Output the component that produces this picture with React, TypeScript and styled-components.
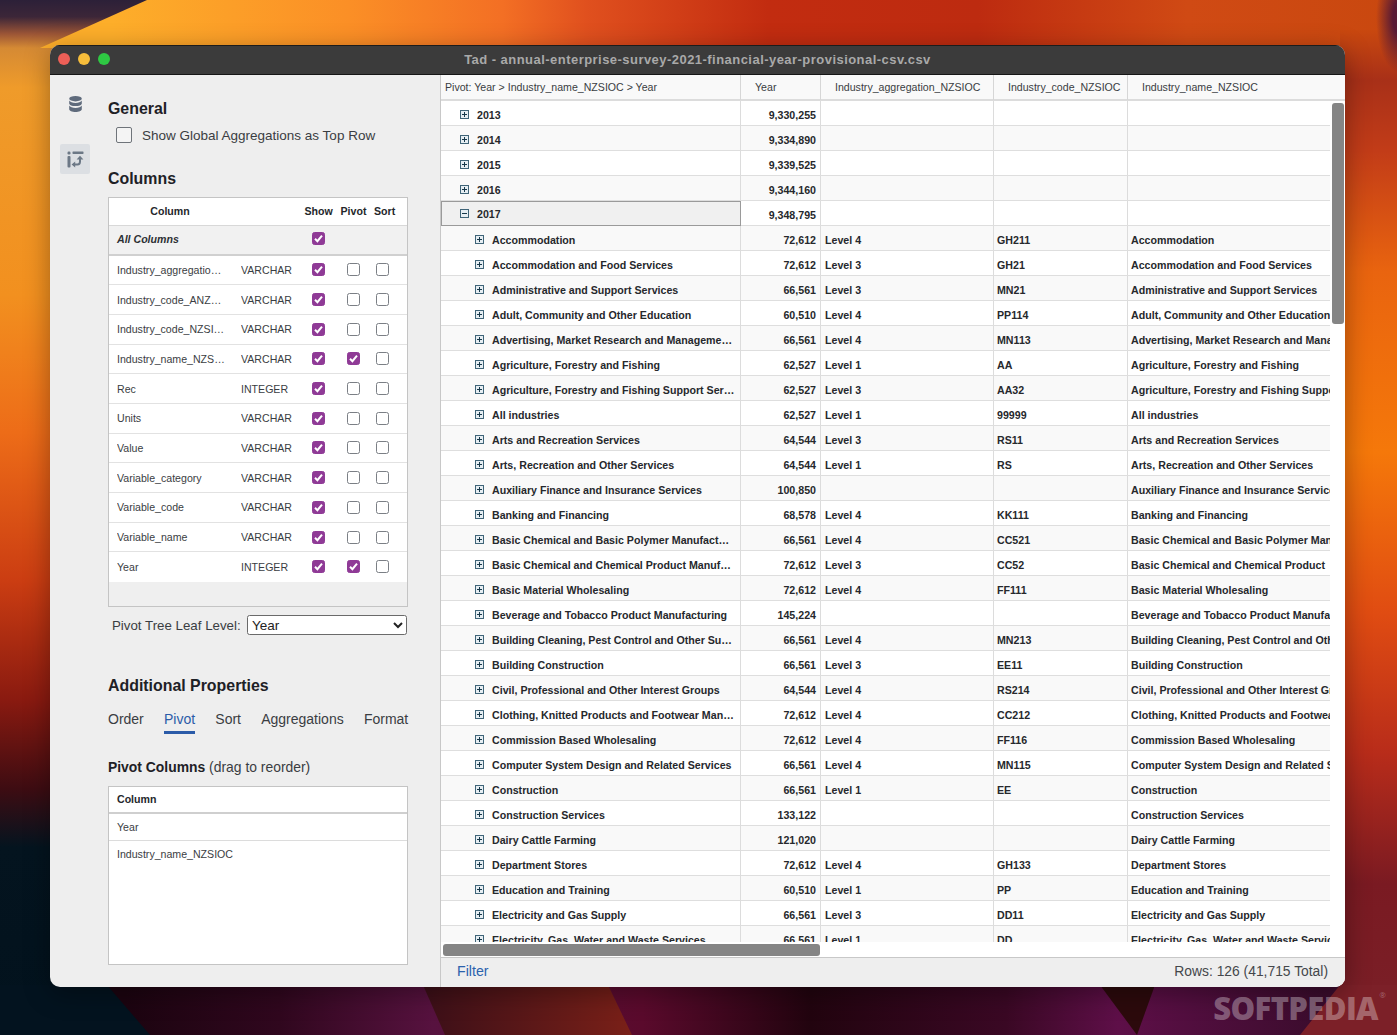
import React from "react";
import styled, { createGlobalStyle } from "styled-components";

const Global = createGlobalStyle`
  html, body { margin: 0; padding: 0; background: #1a0a14; }
  body { font-family: "Liberation Sans", Arial, sans-serif; color: #222; overflow: hidden; }
  * { box-sizing: border-box; }
`;

const Desktop = styled.div`
  position: relative;
  width: 1397px;
  height: 1035px;
  padding: 45px 52px 48px 50px;
  overflow: hidden;
`;
const Wallpaper = styled.svg`
  position: absolute;
  inset: 0;
  width: 1397px;
  height: 1035px;
`;
const Watermark = styled.div`
  position: absolute;
  right: 19px;
  bottom: 10px;
  font-family: "Open Sans", "Liberation Sans", sans-serif;
  font-weight: 800;
  font-size: 31px;
  line-height: 34px;
  letter-spacing: -0.6px;
  color: rgba(255, 255, 255, 0.32);
  sup { font-size: 8px; font-weight: 400; position: absolute; top: -2px; right: -8px; line-height: 12px; letter-spacing: 0; }
`;
const Window = styled.div`
  position: relative;
  width: 100%;
  height: 100%;
  display: flex;
  flex-direction: column;
  border-radius: 10px;
  overflow: hidden;
  background: #eee;
  box-shadow: 0 6px 26px rgba(0, 0, 0, 0.35);
`;
const TitleBar = styled.div`
  position: relative;
  height: 30px;
  flex: none;
  padding-bottom: 2px;
  background: #3b3b3b;
  border-top: 1px solid #1c1c1c;
  border-bottom: 1px solid #161616;
  display: flex;
  align-items: center;
  justify-content: center;
  font-size: 13px;
  font-weight: 700;
  letter-spacing: 0.46px;
  color: #a9a9a9;
`;
const Lights = styled.div`
  position: absolute;
  left: 8px;
  top: 7px;
  display: flex;
  gap: 8px;
`;
const Light = styled.span<{ $c: string }>`
  width: 12px;
  height: 12px;
  border-radius: 50%;
  background: ${(p) => p.$c};
`;
const Body = styled.div`
  flex: 1;
  min-height: 0;
  display: flex;
`;
const Rail = styled.div`
  width: 58px;
  flex: none;
  padding: 14px 0 0 10px;
  display: flex;
  flex-direction: column;
  gap: 25px;
`;
const RailBtn = styled.div<{ $active?: boolean }>`
  width: 30px;
  height: 30px;
  display: flex;
  align-items: center;
  justify-content: center;
  background: ${(p) => (p.$active ? "#dcdfe3" : "transparent")};
  border-radius: 2px;
`;
const Props = styled.div`
  width: 332px;
  flex: none;
  padding-top: 24px;
  display: flex;
  flex-direction: column;
`;
const H2 = styled.h2<{ $mt?: number }>`
  margin: ${(p) => p.$mt ?? 0}px 0 0;
  height: 18px;
  padding-top: 1px;
  font-size: 15.9px;
  line-height: 18px;
  font-weight: 700;
  color: #1e2126;
`;
const GlobalRow = styled.div`
  margin: 9px 0 0 8px;
  height: 18px;
  display: flex;
  align-items: center;
  gap: 10px;
  font-size: 13.5px;
  color: #3a3d42;
`;
const BigBox = styled.span`
  width: 16px;
  height: 16px;
  border: 1px solid #6f747a;
  border-radius: 2px;
  background: #f4f4f4;
`;
const ColTable = styled.div`
  margin-top: 10px;
  width: 300px;
  height: 410px;
  border: 1.5px solid #c4c4c4;
  background: #efefef;
`;
const ColRowBase = styled.div<{ $h: number; $bg: string; $line: string; $lw?: number; $pb?: number }>`
  height: ${(p) => p.$h}px;
  display: grid;
  grid-template-columns: 124px 60px 35px 35px 23px 1fr;
  align-items: center;
  padding: 0 0 ${(p) => p.$pb ?? 0}px 8px;
  background: ${(p) => p.$bg};
  border-bottom: ${(p) => p.$lw ?? 1}px solid ${(p) => p.$line};
  font-size: 10.6px;
  color: #3a3d42;
`;
const ColHead = styled.span<{ $pl?: number; $pr?: number }>`
  font-weight: 700;
  font-size: 10.6px;
  color: #24272b;
  text-align: center;
  white-space: nowrap;
  padding-left: ${(p) => p.$pl ?? 0}px;
  padding-right: ${(p) => p.$pr ?? 0}px;
`;
const AllLabel = styled.span`
  font-weight: 700;
  font-style: italic;
  color: #2c2f33;
`;
const Cell = styled.span`
  white-space: nowrap;
  overflow: hidden;
`;
const BoxCell = styled.span`
  display: flex;
  justify-content: center;
`;
const Box = styled.span<{ $on?: boolean }>`
  width: 13px;
  height: 13px;
  border-radius: 2.5px;
  display: flex;
  align-items: center;
  justify-content: center;
  background: ${(p) => (p.$on ? "#8f3a96" : "#fff")};
  border: 1px solid ${(p) => (p.$on ? "#8f3a96" : "#7b7f85")};
`;
const LeafRow = styled.div`
  margin-top: 8px;
  padding-left: 4px;
  width: 299px;
  height: 20px;
  display: flex;
  align-items: center;
  justify-content: space-between;
  font-size: 13.3px;
  color: #3a3d42;
`;
const LeafSelect = styled.select`
  flex: none;
  width: 160px;
  height: 20px;
  font-family: "Liberation Sans", Arial, sans-serif;
  font-size: 13.5px;
  color: #222;
  background: #fff;
  border: 1px solid #6a6a6a;
  border-radius: 2.5px;
  padding: 0;
`;
const Tabs = styled.div`
  margin-top: 15px;
  height: 25px;
  display: flex;
  gap: 20.2px;
  font-size: 14px;
`;
const Tab = styled.span<{ $active?: boolean }>`
  height: 25px;
  padding-top: 1px;
  line-height: 19px;
  color: ${(p) => (p.$active ? "#2b5ba8" : "#3a3d42")};
  border-bottom: 3px solid ${(p) => (p.$active ? "#2b5ba8" : "transparent")};
`;
const SubTitle = styled.div`
  margin-top: 25px;
  font-size: 13.9px;
  line-height: 16px;
  color: #3a3d42;
  b { color: #1e2126; }
`;
const PivotTable = styled.div`
  margin-top: 11px;
  width: 300px;
  height: 179px;
  background: #fff;
  border: 1.5px solid #c4c4c4;
`;
const PivotHead = styled.div`
  height: 26.5px;
  padding: 0 8px;
  display: flex;
  align-items: center;
  font-size: 10.6px;
  font-weight: 700;
  color: #24272b;
  border-bottom: 2px solid #cfcfcf;
`;
const PivotItem = styled.div<{ $last?: boolean }>`
  height: 27px;
  padding: 0 8px;
  display: flex;
  align-items: center;
  font-size: 10.6px;
  color: #3a3d42;
  border-bottom: ${(p) => (p.$last ? "0" : "1px solid #dcdcdc")};
`;
const GridPane = styled.div`
  flex: 1;
  min-width: 0;
  display: flex;
  flex-direction: column;
  background: #fff;
  border-left: 1px solid #c8c8c8;
`;
const GridMain = styled.div`
  position: relative;
  flex: 1;
  min-height: 0;
  overflow: hidden;
`;
const HeadRow = styled.div`
  height: 26px;
  display: grid;
  grid-template-columns: 300px 80px 173px 134px 1fr;
  background: #f9f9f9;
  border-bottom: 2px solid #dcdcdc;
  font-size: 10.6px;
  color: #3a3d42;
`;
const HeadCell = styled.div<{ $pl: number }>`
  padding-left: ${(p) => p.$pl}px;
  line-height: 25px;
  border-right: 1px solid #d6d6d6;
  white-space: nowrap;
  &:last-child { border-right: 0; }
`;
const RowsClip = styled.div`
  width: 889px;
  height: 841px;
  overflow: hidden;
`;
const Row = styled.div<{ $odd: boolean }>`
  height: 25px;
  display: grid;
  grid-template-columns: 300px 80px 173px 134px 202px;
  background: ${(p) => (p.$odd ? "#f9f9f9" : "#fff")};
  border-bottom: 1px solid #dedede;
  font-size: 10.65px;
  font-weight: 700;
  color: #26282c;
`;
const DCell = styled.div<{ $right?: boolean; $pl?: number }>`
  height: 24px;
  padding: 7px 4px 0 ${(p) => p.$pl ?? 3}px;
  line-height: 14px;
  white-space: nowrap;
  overflow: hidden;
  text-align: ${(p) => (p.$right ? "right" : "left")};
  border-right: 1px solid #dcdcdc;
  &:last-child { border-right: 0; }
`;
const TreeCell = styled.div<{ $depth: number; $sel?: boolean }>`
  height: 25px;
  padding: 7px 0 0 ${(p) => 19 + p.$depth * 15}px;
  display: flex;
  align-items: flex-start;
  gap: 8px;
  line-height: 14px;
  white-space: nowrap;
  overflow: hidden;
  border-right: 1px solid #dcdcdc;
  ${(p) => (p.$sel ? "background:#f0f0f0; outline:1px solid #9a9a9a; outline-offset:-1px; padding-top:6px;" : "")}
`;
const Toggle = styled.svg`
  width: 9px;
  height: 9px;
  flex: none;
  margin-top: 2px;
`;
const VBar = styled.div`
  position: absolute;
  left: 891px;
  top: 28px;
  width: 12px;
  height: 221px;
  border-radius: 3px;
  background: #858585;
`;
const HBar = styled.div`
  position: absolute;
  left: 2px;
  bottom: 1px;
  width: 377px;
  height: 12px;
  border-radius: 3px;
  background: #858585;
`;
const Footer = styled.div`
  height: 30px;
  flex: none;
  display: flex;
  align-items: center;
  justify-content: space-between;
  padding: 0 17px 3px 16px;
  background: #eee;
  border-top: 1px solid #c8c8c8;
  font-size: 13.85px;
  color: #44474b;
`;
const FilterLink = styled.span`
  color: #2b62ad;
  font-size: 14.2px;
`;

const rawRows: [string, string, string, string, string?][] = [
  ["Accommodation", "72,612", "Level 4", "GH211"],
  ["Accommodation and Food Services", "72,612", "Level 3", "GH21"],
  ["Administrative and Support Services", "66,561", "Level 3", "MN21"],
  ["Adult, Community and Other Education", "60,510", "Level 4", "PP114"],
  ["Advertising, Market Research and Manageme…", "66,561", "Level 4", "MN113", "Advertising, Market Research and Management Services"],
  ["Agriculture, Forestry and Fishing", "62,527", "Level 1", "AA"],
  ["Agriculture, Forestry and Fishing Support Ser…", "62,527", "Level 3", "AA32", "Agriculture, Forestry and Fishing Support Services"],
  ["All industries", "62,527", "Level 1", "99999"],
  ["Arts and Recreation Services", "64,544", "Level 3", "RS11"],
  ["Arts, Recreation and Other Services", "64,544", "Level 1", "RS"],
  ["Auxiliary Finance and Insurance Services", "100,850", "", ""],
  ["Banking and Financing", "68,578", "Level 4", "KK111"],
  ["Basic Chemical and Basic Polymer Manufact…", "66,561", "Level 4", "CC521", "Basic Chemical and Basic Polymer Manufacturing"],
  ["Basic Chemical and Chemical Product Manuf…", "72,612", "Level 3", "CC52", "Basic Chemical and Chemical Product"],
  ["Basic Material Wholesaling", "72,612", "Level 4", "FF111"],
  ["Beverage and Tobacco Product Manufacturing", "145,224", "", ""],
  ["Building Cleaning, Pest Control and Other Su…", "66,561", "Level 4", "MN213", "Building Cleaning, Pest Control and Other Support Services"],
  ["Building Construction", "66,561", "Level 3", "EE11"],
  ["Civil, Professional and Other Interest Groups", "64,544", "Level 4", "RS214"],
  ["Clothing, Knitted Products and Footwear Man…", "72,612", "Level 4", "CC212", "Clothing, Knitted Products and Footwear Manufacturing"],
  ["Commission Based Wholesaling", "72,612", "Level 4", "FF116"],
  ["Computer System Design and Related Services", "66,561", "Level 4", "MN115"],
  ["Construction", "66,561", "Level 1", "EE"],
  ["Construction Services", "133,122", "", ""],
  ["Dairy Cattle Farming", "121,020", "", ""],
  ["Department Stores", "72,612", "Level 4", "GH133"],
  ["Education and Training", "60,510", "Level 1", "PP"],
  ["Electricity and Gas Supply", "66,561", "Level 3", "DD11"],
  ["Electricity, Gas, Water and Waste Services", "66,561", "Level 1", "DD"],
];

const years: [string, string][] = [
  ["2013", "9,330,255"],
  ["2014", "9,334,890"],
  ["2015", "9,339,525"],
  ["2016", "9,344,160"],
  ["2017", "9,348,795"],
];

const columns: [string, string, boolean][] = [
  ["Industry_aggregatio…", "VARCHAR", false],
  ["Industry_code_ANZ…", "VARCHAR", false],
  ["Industry_code_NZSI…", "VARCHAR", false],
  ["Industry_name_NZS…", "VARCHAR", true],
  ["Rec", "INTEGER", false],
  ["Units", "VARCHAR", false],
  ["Value", "VARCHAR", false],
  ["Variable_category", "VARCHAR", false],
  ["Variable_code", "VARCHAR", false],
  ["Variable_name", "VARCHAR", false],
  ["Year", "INTEGER", true],
];

const Check = ({ on }: { on?: boolean }) => (
  <Box $on={on}>
    {on && (
      <svg width="9" height="9" viewBox="0 0 9 9">
        <path d="M1 4.8 L3.4 7.2 L8 1.6" fill="none" stroke="#fff" strokeWidth="2" />
      </svg>
    )}
  </Box>
);

const TreeToggle = ({ open }: { open?: boolean }) => (
  <Toggle viewBox="0 0 9 9">
    <rect x="0.5" y="0.5" width="8" height="8" fill="#e6eef3" stroke="#3f6478" />
    <path d={open ? "M2 4.5H7" : "M2 4.5H7M4.5 2V7"} stroke="#17384a" strokeWidth="1" />
  </Toggle>
);

const DatabaseIcon = () => (
  <svg width="13" height="16" viewBox="0 0 13 16" fill="#5f6b7c">
    <ellipse cx="6.5" cy="2.7" rx="6.3" ry="2.7" />
    <path d="M.2 4.6C1 6.3 3.6 7 6.5 7s5.5-.7 6.3-2.4V7.4C12.8 9 10 10.1 6.5 10.1S.2 9 .2 7.4Z" />
    <path d="M.2 9.6C1 11.2 3.6 11.9 6.5 11.9s5.5-.7 6.3-2.3v3.7C12.8 14.9 10 16 6.5 16S.2 14.9.2 13.3Z" />
  </svg>
);

const PivotIcon = () => (
  <svg width="17" height="17" viewBox="0 0 17 17" fill="#6c7886">
    <rect x="0.5" y="0.5" width="3" height="3" rx="1.2" />
    <rect x="5.5" y="0.5" width="11" height="2.4" rx="0.6" />
    <rect x="0.5" y="5" width="3" height="11.5" rx="1" />
    <path d="M6 13.5H10.5Q13 13.5 13 10.5V8" fill="none" stroke="#6c7886" strokeWidth="2" />
    <path d="M9.6 8.6L13 4.8L16.4 8.6Z" />
    <path d="M8.2 10.4L4.6 13.5L8.2 16.6Z" />
  </svg>
);

const WallpaperArt = () => (
  <Wallpaper viewBox="0 0 1397 1035" preserveAspectRatio="none">
    <defs>
      <linearGradient id="top" x1="0" x2="1" y1="0" y2="0">
        <stop offset="0.08" stopColor="#fdae2a" />
        <stop offset="0.25" stopColor="#fb8f26" />
        <stop offset="0.36" stopColor="#f36f24" />
        <stop offset="0.42" stopColor="#e0501e" />
        <stop offset="0.55" stopColor="#c22c10" />
        <stop offset="0.7" stopColor="#bd2b10" />
        <stop offset="0.85" stopColor="#d04a14" />
        <stop offset="1" stopColor="#c9480f" />
      </linearGradient>
      <linearGradient id="corner" x1="0" x2="0" y1="0" y2="1">
        <stop offset="0" stopColor="#2c2038" />
        <stop offset="0.35" stopColor="#3c2638" />
        <stop offset="0.7" stopColor="#9a5436" />
        <stop offset="1" stopColor="#d58a34" />
      </linearGradient>
      <linearGradient id="left" x1="0" x2="0" y1="0" y2="1">
        <stop offset="0" stopColor="#d58a34" />
        <stop offset="0.04" stopColor="#ef9b2a" />
        <stop offset="0.25" stopColor="#f2901f" />
        <stop offset="0.39" stopColor="#ed6c18" />
        <stop offset="0.54" stopColor="#cb3d12" />
        <stop offset="0.66" stopColor="#8a1a10" />
        <stop offset="0.75" stopColor="#3e0c12" />
        <stop offset="0.81" stopColor="#04141f" />
        <stop offset="1" stopColor="#02121d" />
      </linearGradient>
      <linearGradient id="right" x1="0" x2="0" y1="0" y2="1">
        <stop offset="0" stopColor="#c9480f" />
        <stop offset="0.05" stopColor="#a83018" />
        <stop offset="0.12" stopColor="#c23c18" />
        <stop offset="0.24" stopColor="#e9640f" />
        <stop offset="0.42" stopColor="#f5780a" />
        <stop offset="0.58" stopColor="#e04c12" />
        <stop offset="0.72" stopColor="#b82c1a" />
        <stop offset="0.85" stopColor="#7a1a22" />
        <stop offset="1" stopColor="#7a2028" />
      </linearGradient>
      <linearGradient id="bottom" x1="0" x2="1" y1="0" y2="0">
        <stop offset="0.09" stopColor="#1c0410" />
        <stop offset="0.2" stopColor="#30071e" />
        <stop offset="0.31" stopColor="#57123f" />
        <stop offset="0.46" stopColor="#5a0a2c" />
        <stop offset="0.58" stopColor="#22040f" />
        <stop offset="0.72" stopColor="#3a0824" />
        <stop offset="0.8" stopColor="#5e0f48" />
        <stop offset="0.95" stopColor="#3a0c2c" />
      </linearGradient>
      <linearGradient id="wedge" x1="0" x2="1" y1="0" y2="0">
        <stop offset="0" stopColor="#3b0f18" />
        <stop offset="1" stopColor="#7a2018" />
      </linearGradient>
      <radialGradient id="cornerRight">
        <stop offset="0.3" stopColor="#581a34" />
        <stop offset="1" stopColor="#581a34" stopOpacity="0" />
      </radialGradient>
    </defs>
    <rect width="1397" height="1035" fill="#1d0612" />
    <rect x="0" y="0" width="1397" height="200" fill="url(#top)" />
    <rect x="1340" y="30" width="57" height="1005" fill="url(#right)" />
    <ellipse cx="1400" cy="18" rx="24" ry="55" fill="url(#cornerRight)" />
    <rect x="0" y="48" width="60" height="987" fill="url(#left)" />
    <path d="M0 0H147L40 48H0Z" fill="url(#corner)" />
    <rect x="0" y="985" width="1397" height="50" fill="url(#bottom)" />
    <path d="M0 985H107L150 1035H0Z" fill="#03131f" />
    <path d="M423 985H608L632 1035H445Z" fill="url(#wedge)" />
    <path d="M1100 985H1155L1137 1035Z" fill="#2c0a0c" />
    <path d="M1340 985H1397V1035H1300Z" fill="#7c2028" />
  </Wallpaper>
);

export default function App() {
  return (
    <Desktop>
      <Global />
      <WallpaperArt />
      <Window>
        <TitleBar>
          <Lights>
            <Light $c="#ed5f57" />
            <Light $c="#f6bd3b" />
            <Light $c="#2ec843" />
          </Lights>
          Tad - annual-enterprise-survey-2021-financial-year-provisional-csv.csv
        </TitleBar>
        <Body>
          <Rail>
            <RailBtn><DatabaseIcon /></RailBtn>
            <RailBtn $active><PivotIcon /></RailBtn>
          </Rail>
          <Props>
            <H2>General</H2>
            <GlobalRow>
              <BigBox />
              Show Global Aggregations as Top Row
            </GlobalRow>
            <H2 $mt={25}>Columns</H2>
            <ColTable>
              <ColRowBase $h={27.5} $bg="#fff" $line="#d8d8d8">
                <ColHead $pr={18}>Column</ColHead>
                <span />
                <ColHead>Show</ColHead>
                <ColHead>Pivot</ColHead>
                <ColHead $pl={3}>Sort</ColHead>
              </ColRowBase>
              <ColRowBase $h={30} $bg="#f1f1f1" $line="#d0d0d0" $lw={2} $pb={2}>
                <AllLabel>All Columns</AllLabel>
                <span />
                <BoxCell><Check on /></BoxCell>
              </ColRowBase>
              {columns.map(([n, t, piv], i) => (
                <ColRowBase key={n} $h={29.7} $bg="#fff" $line={i === columns.length - 1 ? "#fff" : "#e2e2e2"}>
                  <Cell>{n}</Cell>
                  <Cell>{t}</Cell>
                  <BoxCell><Check on /></BoxCell>
                  <BoxCell><Check on={piv} /></BoxCell>
                  <BoxCell><Check /></BoxCell>
                </ColRowBase>
              ))}
            </ColTable>
            <LeafRow>
              Pivot Tree Leaf Level:
              <LeafSelect defaultValue="Year">
                <option>Year</option>
              </LeafSelect>
            </LeafRow>
            <H2 $mt={41}>Additional Properties</H2>
            <Tabs>
              <Tab>Order</Tab>
              <Tab $active>Pivot</Tab>
              <Tab>Sort</Tab>
              <Tab>Aggregations</Tab>
              <Tab>Format</Tab>
            </Tabs>
            <SubTitle><b>Pivot Columns</b> (drag to reorder)</SubTitle>
            <PivotTable>
              <PivotHead>Column</PivotHead>
              <PivotItem>Year</PivotItem>
              <PivotItem $last>Industry_name_NZSIOC</PivotItem>
            </PivotTable>
          </Props>
          <GridPane>
            <GridMain>
              <HeadRow>
                <HeadCell $pl={4}>Pivot: Year &gt; Industry_name_NZSIOC &gt; Year</HeadCell>
                <HeadCell $pl={14}>Year</HeadCell>
                <HeadCell $pl={14}>Industry_aggregation_NZSIOC</HeadCell>
                <HeadCell $pl={14}>Industry_code_NZSIOC</HeadCell>
                <HeadCell $pl={14}>Industry_name_NZSIOC</HeadCell>
              </HeadRow>
              <RowsClip>
                {years.map(([y, n], i) => (
                  <Row key={y} $odd={i % 2 === 1}>
                    <TreeCell $depth={0} $sel={i === 4}>
                      <TreeToggle open={i === 4} />
                      {y}
                    </TreeCell>
                    <DCell $right>{n}</DCell>
                    <DCell />
                    <DCell />
                    <DCell />
                  </Row>
                ))}
                {rawRows.map(([name, n, lvl, code, full], i) => (
                  <Row key={name} $odd={(i + 5) % 2 === 1}>
                    <TreeCell $depth={1}>
                      <TreeToggle />
                      {name}
                    </TreeCell>
                    <DCell $right>{n}</DCell>
                    <DCell $pl={4}>{lvl}</DCell>
                    <DCell>{code}</DCell>
                    <DCell>{full ?? name}</DCell>
                  </Row>
                ))}
              </RowsClip>
              <VBar />
              <HBar />
            </GridMain>
            <Footer>
              <FilterLink>Filter</FilterLink>
              <span>Rows: 126 (41,715 Total)</span>
            </Footer>
          </GridPane>
        </Body>
      </Window>
      <Watermark>SOFTPEDIA<sup>®</sup></Watermark>
    </Desktop>
  );
}
